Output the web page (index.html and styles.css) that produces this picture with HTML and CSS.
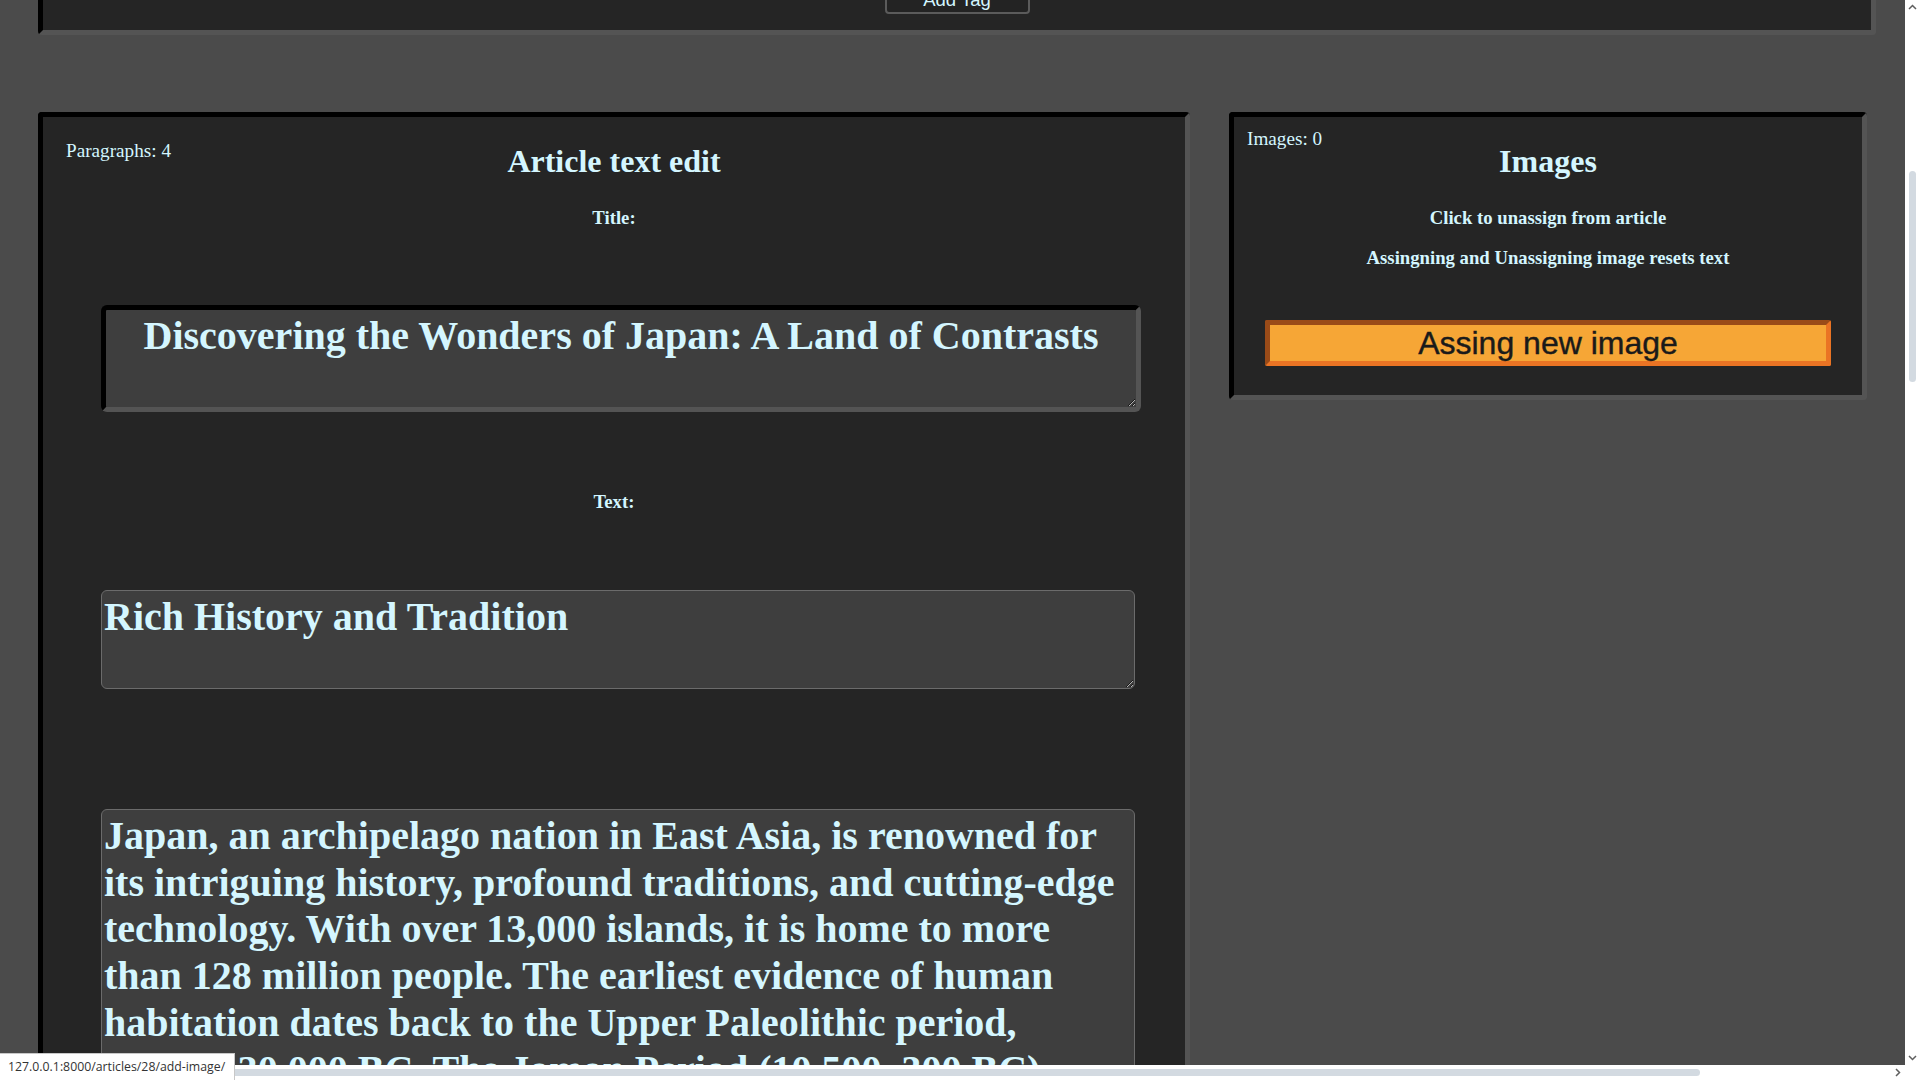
FILE: index.html
```html
<!DOCTYPE html>
<html lang="en">
<head>
<meta charset="utf-8">
<title>Add image – Article editor</title>
<link rel="stylesheet" href="styles.css">
</head>
<body>
<div class="scroller" id="scroller">
  <main class="page">
    <section class="tags-panel" id="tags-panel">
      <h1 class="panel-title">Tags</h1>
      <ul class="tag-list">
        <li class="tag">Japan</li>
        <li class="tag">Travel</li>
        <li class="tag">Culture</li>
        <li class="tag">History</li>
      </ul>
      <input class="tag-input" type="text" placeholder="New tag">
      <button class="add-tag" type="button">Add Tag</button>
    </section>

    <div class="content">
      <section class="panel editor">
        <span class="counter">Paragraphs: 4</span>
        <h1 class="panel-title">Article text edit</h1>
        <h3 class="label">Title:</h3>
        <textarea class="title-input">Discovering the Wonders of Japan: A Land of Contrasts</textarea>
        <h3 class="label label-text">Text:</h3>
        <textarea class="para para-heading">Rich History and Tradition</textarea>
        <textarea class="para para-body">Japan, an archipelago nation in East Asia, is renowned for its intriguing history, profound traditions, and cutting-edge technology. With over 13,000 islands, it is home to more than 128 million people. The earliest evidence of human habitation dates back to the Upper Paleolithic period, around 30,000 BC. The Jomon Period (10,500–300 BC) witnessed the creation of some of the world's oldest pottery, and the following Yayoi Period brought rice cultivation and metalworking from the continent. Over the centuries, imperial courts, samurai clans and shoguns shaped a culture that still honors its ancient customs while embracing the future.</textarea>
        <textarea class="para para-heading">Breathtaking Natural Beauty</textarea>
        <textarea class="para para-body">From the snow-capped peak of Mount Fuji to the subtropical beaches of Okinawa, Japan offers an astonishing variety of landscapes. Cherry blossoms paint the country pink every spring, while autumn turns the mountains into a blaze of red and gold. Hot springs, ancient forests and quiet temple gardens invite travelers to slow down and experience the harmony between people and nature that defines Japanese life.</textarea>
      </section>

      <aside class="panel images">
        <span class="counter">Images: 0</span>
        <h1 class="panel-title">Images</h1>
        <h3 class="label">Click to unassign from article</h3>
        <h3 class="label label-note">Assingning and Unassigning image resets text</h3>
        <button class="assign" type="button">Assing new image</button>
      </aside>
    </div>
  </main>
</div>

<div class="vscroll" aria-hidden="true">
  <svg class="sb-arrow" width="15" height="15" viewBox="0 0 15 15"><polyline points="4,9 7.5,5.5 11,9"/></svg>
  <div class="vtrack"><div class="vthumb"></div></div>
  <svg class="sb-arrow" width="15" height="15" viewBox="0 0 15 15"><polyline points="4,6 7.5,9.5 11,6"/></svg>
</div>
<div class="hscroll" aria-hidden="true">
  <svg class="sb-arrow" width="15" height="15" viewBox="0 0 15 15"><polyline points="9,4 5.5,7.5 9,11"/></svg>
  <div class="htrack"><div class="hthumb"></div></div>
  <svg class="sb-arrow" width="15" height="15" viewBox="0 0 15 15"><polyline points="6,4 9.5,7.5 6,11"/></svg>
</div>
<div class="scroll-corner" aria-hidden="true"></div>

<div class="link-preview">127.0.0.1:8000/articles/28/add-image/</div>

<script src="script.js"></script>
</body>
</html>
```

FILE: styles.css
```css
* {
  box-sizing: border-box;
}

html,
body {
  margin: 0;
  height: 100%;
  overflow: hidden;
}

body {
  background: #4b4b4b;
  color: #d4f6ff;
  font-family: "Liberation Serif", "Times New Roman", serif;
}

/* page scroller */
.scroller {
  height: 100vh;
  overflow: auto;
  scrollbar-width: none;
}

.scroller::-webkit-scrollbar {
  display: none;
}

.page {
  width: 2120px;
  padding: 30px 0 204px 38px;
}

/* shared panel look */
.tags-panel,
.panel {
  background: #252525;
  border: 5px solid;
  border-color: #000000 #545454 #545454 #000000;
  border-radius: 4px;
}

/* tags panel (top) */
.tags-panel {
  width: 1838px;
  min-height: 792px;
  padding: 20px 20px 16px;
  display: flex;
  flex-direction: column;
  align-items: center;
  justify-content: flex-end;
  gap: 16px;
}

.tag-list {
  display: flex;
  gap: 12px;
  list-style: none;
  margin: 0;
  padding: 0;
}

.tag {
  padding: 4px 12px;
  border: 2px solid #5b5b5b;
  border-radius: 4px;
  font-size: 18px;
}

.tag-input {
  width: 300px;
  height: 30px;
  background: #3e3e3e;
  border: 1px solid #6b6b6b;
  border-radius: 4px;
  color: #d4f6ff;
  font: 16px "Liberation Sans", Arial, sans-serif;
}

.add-tag {
  width: 145px;
  margin: 0;
  padding: 2px 0;
  background: #232323;
  border: 2px solid #5b5b5b;
  border-radius: 4px;
  color: #d4f6ff;
  font: 18.5px/21px "Liberation Sans", Arial, sans-serif;
}

/* content row */
.content {
  display: flex;
  align-items: flex-start;
  gap: 39px;
  margin-top: 77px;
}

.panel {
  position: relative;
  display: flex;
  flex-direction: column;
  align-items: center;
}

.counter {
  position: absolute;
  font-size: 19.2px;
  line-height: 22px;
}

.panel-title {
  margin: 26px 0 0;
  font-size: 32px;
  line-height: 37px;
  font-weight: bold;
}

.label {
  margin: 27px 0 0;
  font-size: 18.72px;
  line-height: 22px;
  font-weight: bold;
}

/* editor panel */
.editor {
  width: 1152px;
  padding-bottom: 120px;
}

.editor .counter {
  top: 23px;
  left: 23px;
}

.editor textarea {
  align-self: flex-start;
  margin: 0 0 0 58px;
  padding: 3px 2px 1px;
  background: #3e3e3e;
  color: #d4f6ff;
  font: bold 40px/46.7px "Liberation Serif", "Times New Roman", serif;
  overflow: hidden;
  outline: none;
}

.title-input {
  width: 1040px;
  height: 107px;
  margin-top: 76px !important;
  text-align: center;
  border: 5px solid;
  border-color: #000000 #545454 #545454 #000000;
  border-radius: 6px;
}

.label-text {
  margin-top: 79px;
}

.para {
  width: 1034px;
  margin-top: 120px !important;
  border: 1px solid #6b6b6b;
  border-radius: 6px;
}

.label-text + .para {
  margin-top: 77px !important;
}

.para-heading {
  height: 99px;
}

.para-body {
  height: 1480px;
}

/* images panel */
.images {
  width: 638px;
  padding-bottom: 29px;
}

.images .counter {
  top: 11px;
  left: 13px;
}

.label-note {
  margin-top: 18px;
}

.assign {
  width: 90%;
  height: 46px;
  margin: 51px 0 0;
  padding: 0;
  background: #f6a636;
  border: 5px solid;
  border-color: #9a4b18 #ea7424 #ea7424 #9a4b18;
  border-radius: 2px;
  color: #1a1a1a;
  font: 32px/36px "Liberation Sans", Arial, sans-serif;
  -webkit-text-stroke: 0.4px #1a1a1a;
}

/* browser scrollbars (drawn over the page) */
.vscroll,
.hscroll,
.scroll-corner {
  position: fixed;
  z-index: 5;
  background: #ffffff;
}

.vscroll {
  top: 0;
  right: 0;
  width: 15px;
  height: 1065px;
  display: flex;
  flex-direction: column;
}

.hscroll {
  left: 0;
  bottom: 0;
  width: 1905px;
  height: 15px;
  display: flex;
}

.scroll-corner {
  right: 0;
  bottom: 0;
  width: 15px;
  height: 15px;
}

.sb-arrow {
  flex: none;
  display: block;
}

.sb-arrow polyline {
  fill: none;
  stroke: #5f5f5f;
  stroke-width: 1.5;
}

.vtrack {
  flex: 1;
  padding: 156px 4px 0;
}

.vthumb {
  height: 211px;
  border-radius: 4px;
  background: #d3dae1;
}

.htrack {
  flex: 1;
  padding: 4px 0;
}

.hthumb {
  width: 1685px;
  height: 7px;
  border-radius: 4px;
  background: #d3dae1;
}

/* browser link preview (overlay) */
.link-preview {
  position: fixed;
  left: 0;
  bottom: 0;
  z-index: 10;
  width: 235px;
  height: 27px;
  padding-left: 8px;
  background: #ffffff;
  border-top: 1px solid #c8c8c8;
  border-right: 1px solid #c8c8c8;
  color: #333333;
  font: 12.3px/26px "Open Sans", "Noto Sans", sans-serif;
  white-space: nowrap;
}
```

FILE: script.js
```js
(function () {
  var scroller = document.getElementById('scroller');
  var panel = document.getElementById('tags-panel');
  scroller.scrollTop = panel.getBoundingClientRect().bottom - 35;
})();
```
